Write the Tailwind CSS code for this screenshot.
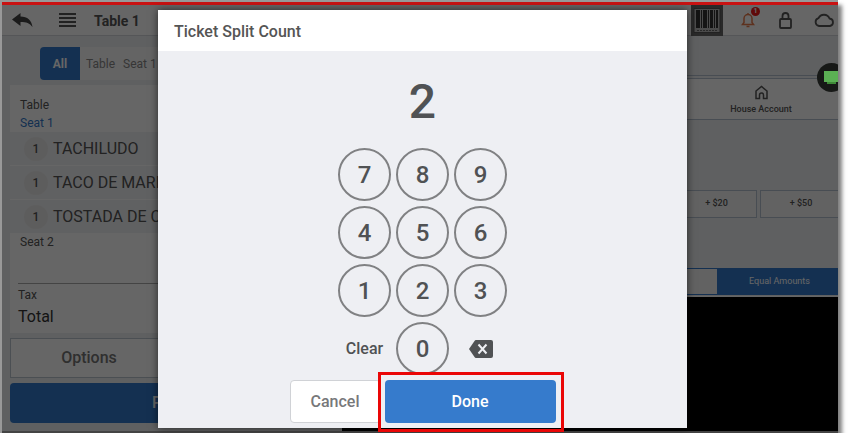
<!DOCTYPE html>
<html lang="en">
<head>
    <meta charset="UTF-8">
    <meta name="viewport" content="width=device-width, initial-scale=1.0">
    <title>Ticket Split Count</title>
    <script src="https://cdn.jsdelivr.net/npm/@tailwindcss/browser@4"></script>
</head>
<body class="bg-white font-[Roboto,sans-serif] text-[#555] overflow-hidden">
    <div class="relative mr-[14px] border-t-2 border-l-2 border-[#999] shadow-[4px_5px_4px_#00000080]">
        <div class="relative overflow-hidden border-t-3 border-t-[#c91212] border-b-2 border-b-[#444] bg-[#edf0f3]">

            <!-- Top bar -->
            <header class="flex items-center h-[31px] bg-white border-b border-[#d5d8db]">
                <button aria-label="Back" class="ml-[10px]">
                    <svg class="w-[21px] h-[15px]" viewBox="0 0 21 15" fill="#444"><path d="M0 6.500 8.500 0v3.500c7 0 11 4 12 10.500-3-4-6-5-12-5v4z"/></svg>
                </button>
                <button aria-label="Menu" class="ml-[26px]">
                    <svg class="w-[17px] h-[14px]" viewBox="0 0 17 14" fill="#555"><path d="M0 0h17v2H0zM0 4h17v2H0zM0 8h17v2H0zM0 12h17v2H0z"/></svg>
                </button>
                <h1 class="ml-[18px] pt-[2px] text-sm font-bold">Table 1</h1>
                <div class="ml-auto flex items-center">
                    <button aria-label="Scan barcode" class="mr-[18px]">
                        <svg class="w-[32px] h-[31px]" viewBox="0 0 32 31"><path fill="#666" d="M0 0h32v31H0z"/><path fill="#bbb" stroke="#555" d="M3 3.500h26v24H3z"/><path fill="#333" d="M5 5h4v18H5zM10 5h1v18h-1zM12 5h4v18h-4zM17 5h1v18h-1zM19 5h3v18h-3zM23 5h1v18h-1zM25 5h2v18h-2z"/><path stroke="#666" stroke-dasharray="2 1" d="M6 25.500h20"/></svg>
                    </button>
                    <button aria-label="Notifications" class="relative mr-[24px]">
                        <svg class="w-[14px] h-[16px]" viewBox="0 0 14 16" fill="none" stroke="#e87c4c" stroke-width="1.500"><path d="M1.500 12.500h11L11 10.500V6.500a4 4 0 0 0-8 0v4zM7 2.500V1M5.500 14.500h3"/></svg>
                        <span class="absolute -top-[5px] -right-[5px] size-[9px] rounded-full bg-[#f01818] text-[7px] leading-[9px] font-bold text-center text-white">1</span>
                    </button>
                    <button aria-label="Lock" class="mr-[22px]">
                        <svg class="w-[13px] h-[17px]" viewBox="0 0 13 17" fill="none" stroke="#555" stroke-width="1.800"><rect x="1" y="7" width="11" height="9" rx="1"/><path d="M3.500 7V4a3 3 0 0 1 6 0v3"/></svg>
                    </button>
                    <button aria-label="Sync" class="mr-[3px]">
                        <svg class="w-[21px] h-[14px]" viewBox="0 0 21 14" fill="none" stroke="#555" stroke-width="1.800"><path d="M5 13a4 4 0 0 1-.5-7.800A6 6 0 0 1 15.500 5.500 3.800 3.800 0 0 1 16 13z"/></svg>
                    </button>
                </div>
            </header>

            <div class="flex">
                <!-- Ticket -->
                <section class="w-[340px] shrink-0 px-2 pt-[11px] pb-2">
                    <div class="ml-[30px] flex h-[33px] items-center rounded bg-[#fafafa] text-xs text-[#888]">
                        <button class="h-full w-10 rounded-l bg-[#3379cb] font-bold text-white">All</button>
                        <button class="ml-[6px]">Table</button>
                        <button class="ml-[8px]">Seat 1</button>
                    </div>
                    <div class="mt-[5px] h-[248px] bg-white pt-[11px] text-xs">
                        <p class="pl-[10px] leading-[18px]">Table</p>
                        <p class="pl-[10px] leading-[18px] text-[#3379cb]">Seat 1</p>
                        <ul class="text-base">
                            <li class="flex h-[34px] items-center border-b border-white bg-[#f1f2f4] pl-[14px]">
                                <span class="mr-[5px] size-6 rounded-full bg-[#e9e9e9] text-center text-xs leading-6 font-medium">1</span>TACHILUDO
                            </li>
                            <li class="flex h-[34px] items-center border-b border-white bg-[#f1f2f4] pl-[14px]">
                                <span class="mr-[5px] size-6 rounded-full bg-[#e9e9e9] text-center text-xs leading-6 font-medium">1</span>TACO DE MARLIN
                            </li>
                            <li class="flex h-[33px] items-center bg-[#f1f2f4] pl-[14px]">
                                <span class="mr-[5px] size-6 rounded-full bg-[#e9e9e9] text-center text-xs leading-6 font-medium">1</span>TOSTADA DE CAMARON
                            </li>
                        </ul>
                        <p class="pl-[10px] leading-[18px]">Seat 2</p>
                        <div class="mt-[32px] ml-2 border-t border-[#aaa] pt-[2px]">
                            <p class="leading-[18px]">Tax</p>
                            <p class="text-base leading-[26px] text-[#333]">Total</p>
                        </div>
                    </div>
                    <div class="mt-[5px] flex gap-2">
                        <button class="h-10 flex-1 border border-[#bcc5d0] bg-white text-base font-medium text-[#777]">Options</button>
                        <button class="h-10 flex-1 border border-[#bcc5d0] bg-white text-base font-medium text-[#777]">Send</button>
                    </div>
                    <button class="mt-[5px] h-10 w-full rounded bg-[#3379cb] text-base font-medium text-white">Place</button>
                </section>

                <!-- Payment -->
                <section class="flex flex-1 flex-col text-[9px] font-medium">
                    <div class="mt-[39px] h-1 border-y border-[#b4c0cf]"></div>
                    <div class="flex justify-end border-b border-[#b4c0cf] bg-white">
                        <button class="flex h-10 w-[154px] flex-col items-center justify-center gap-[3px] pt-1">
                            <svg class="size-[15px]" viewBox="0 0 15 15" fill="none" stroke="#555" stroke-width="1.500"><path d="M2 6 7.500 1.500 13 6v7.500H9.500V10a2 2 0 0 0-4 0v3.500H2z"/></svg>
                            House Account
                        </button>
                    </div>
                    <div class="mt-[70px] flex justify-end gap-[3px]">
                        <button class="h-7 w-[81px] border border-[#b4c0cf] bg-[#f4f4f4]">+ $20</button>
                        <button class="-mr-[4px] h-7 w-[82px] border border-[#b4c0cf] bg-[#f4f4f4]">+ $50</button>
                    </div>
                    <div class="mt-[50px] flex h-[27px] border border-r-0 border-[#3379cb] font-normal">
                        <button class="flex-1 bg-[#f4f4f4]">Custom</button>
                        <button class="w-[121px] bg-[#3379cb] pl-1 text-white">Equal Amounts</button>
                    </div>
                    <div class="mt-[1px] flex-1 border-t border-white bg-black"></div>
                </section>
            </div>

            <div class="absolute inset-0 bg-black/60"></div>

            <!-- Customer display status -->
            <div class="absolute top-[58px] -right-[8px] flex size-[29px] items-center justify-center rounded-full bg-[#171917]">
                <svg class="w-[15px] h-[14px]" viewBox="0 0 15 14"><path fill="#5bb054" d="M0 0h15v11H0z"/><path fill="#3f8a38" d="M3 11h9v2H3z"/></svg>
            </div>
        </div>

        <!-- Split dialog -->
        <div class="absolute inset-0 pt-2 pr-[151px] pb-[5px] pl-[156px]">
            <div role="dialog" aria-labelledby="title" class="flex h-full flex-col bg-[#eeeff3] shadow-[0_0_8px_#00000099]">
                <h2 id="title" class="bg-white pt-[3px] pl-4 text-base leading-[38px] font-medium text-[#555]">Ticket Split Count</h2>
                <output class="mt-[22px] block text-center text-5xl leading-[58px] font-medium text-[#505254]">2</output>
                <div class="mx-auto mt-[17px] grid grid-cols-3 gap-[5px] text-2xl font-medium text-[#505254]">
                    <button class="size-[53px] rounded-full border-2 border-[#808183]">7</button>
                    <button class="size-[53px] rounded-full border-2 border-[#808183]">8</button>
                    <button class="size-[53px] rounded-full border-2 border-[#808183]">9</button>
                    <button class="size-[53px] rounded-full border-2 border-[#808183]">4</button>
                    <button class="size-[53px] rounded-full border-2 border-[#808183]">5</button>
                    <button class="size-[53px] rounded-full border-2 border-[#808183]">6</button>
                    <button class="size-[53px] rounded-full border-2 border-[#808183]">1</button>
                    <button class="size-[53px] rounded-full border-2 border-[#808183]">2</button>
                    <button class="size-[53px] rounded-full border-2 border-[#808183]">3</button>
                    <button class="size-[53px] text-base">Clear</button>
                    <button class="size-[53px] rounded-full border-2 border-[#808183]">0</button>
                    <button aria-label="Delete" class="flex size-[53px] items-center justify-center">
                        <svg class="w-6 h-[18px]" viewBox="0 0 24 18"><path fill="#505254" d="M7 0h15a2 2 0 0 1 2 2v14a2 2 0 0 1-2 2H7q-1 0-1.500-1L0 9l5.500-8Q6 0 7 0z"/><path fill="none" stroke="#eeeff3" stroke-width="2" d="m9.500 4.500 8 9m0-9-8 9"/></svg>
                    </button>
                </div>
                <div class="mt-[5px] flex justify-center gap-1 text-base font-medium">
                    <button class="h-[43px] w-[91px] rounded-sm border border-[#d0d2d6] bg-white text-[#77787a]">Cancel</button>
                    <div class="relative">
                        <button class="h-[43px] w-[171px] rounded-sm bg-[#367bcc] text-white">Done</button>
                        <span class="pointer-events-none absolute -top-[8px] -right-[8px] -bottom-[9px] -left-[7px] border-3 border-[#ea0606]"></span>
                    </div>
                </div>
            </div>
        </div>
    </div>
</body>
</html>
